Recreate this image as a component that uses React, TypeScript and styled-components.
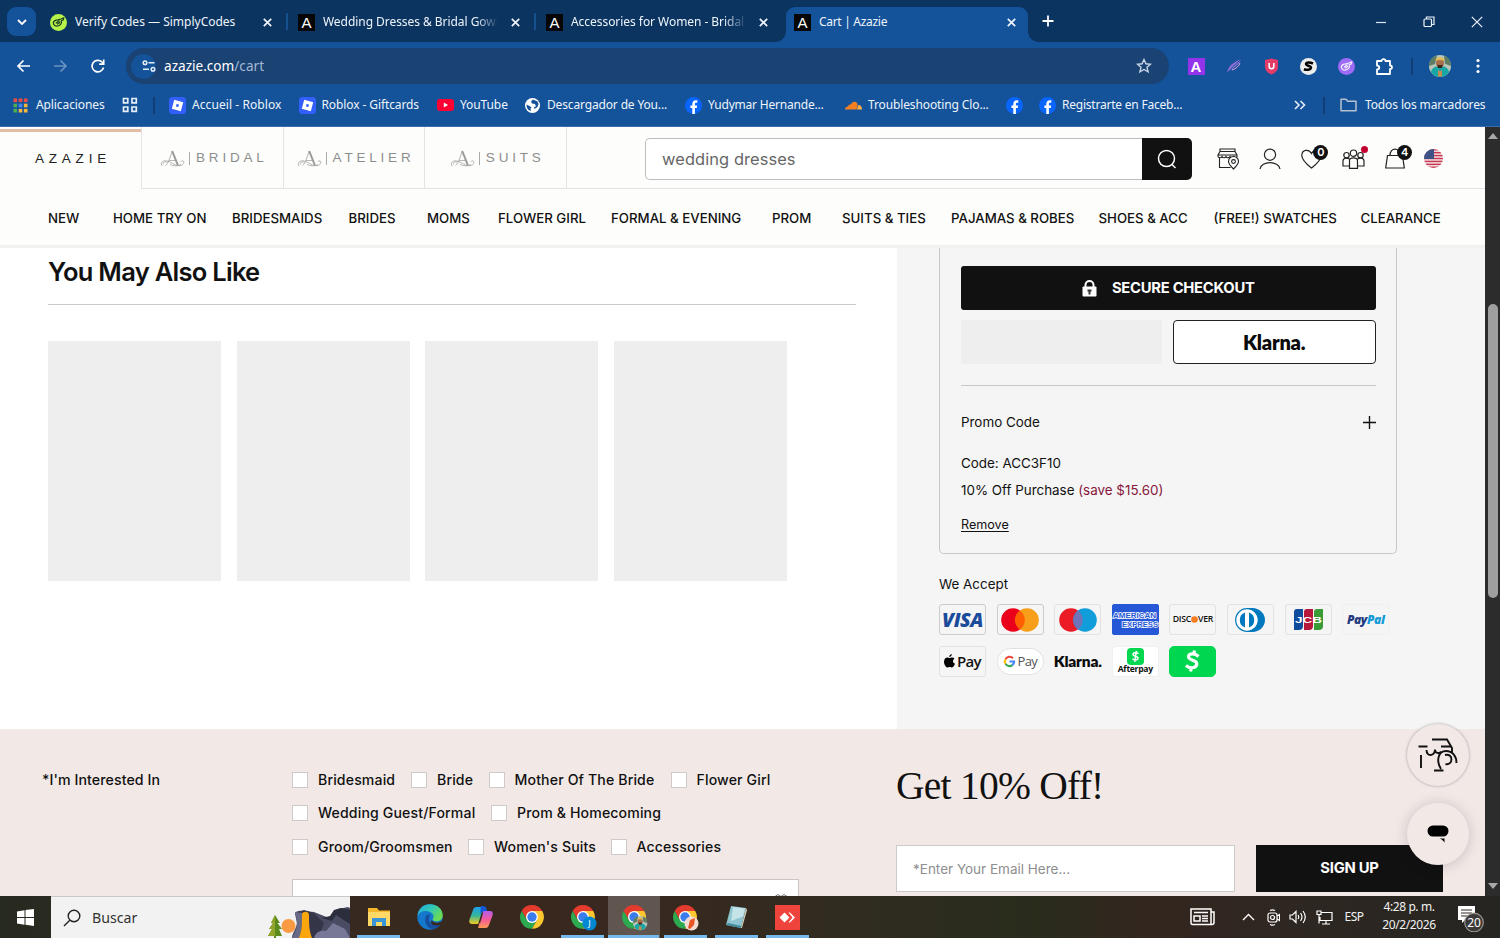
import React from "react";
import styled, { createGlobalStyle } from "styled-components";

const UI = `"Noto Sans", "Open Sans", sans-serif`;
const BODY = `Inter, "Liberation Sans", sans-serif`;

const Global = createGlobalStyle`
  *, *::before, *::after { box-sizing: border-box; }
  html, body { margin: 0; padding: 0; }
  body { width: 1500px; height: 938px; overflow: hidden; font-family: ${BODY}; color: #111; }
  svg { display: block; flex: none; }
`;

const Screen = styled.div`
  width: 1500px;
  height: 938px;
  display: flex;
  flex-direction: column;
  background: #14529a;
`;

/* ---------- browser chrome ---------- */

const TabStrip = styled.div`
  height: 42px;
  display: flex;
  align-items: flex-end;
  background: #0c3460;
`;

const TabSearch = styled.div`
  width: 29px;
  height: 29px;
  margin: 0 6px 6px 7px;
  border-radius: 9px;
  background: #14529a;
  display: grid;
  place-items: center;
`;

const TabBox = styled.div<{ $active?: boolean }>`
  position: relative;
  width: ${(p) => (p.$active ? 242 : 248)}px;
  height: 35px;
  padding: 0 12px 5px 8px;
  padding-right: ${(p) => (p.$active ? 12 : 18)}px;
  display: flex;
  align-items: center;
  gap: 8px;
  color: #eef4fb;
  border-radius: 9px 9px 0 0;
  background: ${(p) => (p.$active ? "#14529a" : "transparent")};
  &::before, &::after {
    content: "";
    display: ${(p) => (p.$active ? "block" : "none")};
    position: absolute;
    bottom: 0;
    width: 10px;
    height: 10px;
  }
  &::before { left: -10px; background: radial-gradient(circle at 0 0, transparent 9.5px, #14529a 10px); }
  &::after { right: -10px; background: radial-gradient(circle at 100% 0, transparent 9.5px, #14529a 10px); }
`;

const TabSep = styled.i`
  position: absolute;
  right: 2px;
  top: 6px;
  width: 2px;
  height: 17px;
  background: #17508f;
`;

const TabTitle = styled.span<{ $fade?: boolean; $ls?: number }>`
  flex: 1;
  min-width: 0;
  font: 400 12px/18px ${UI};
  letter-spacing: ${(p) => p.$ls ?? 0}px;
  white-space: nowrap;
  overflow: hidden;
  margin-right: 6px;
  ${(p) => p.$fade && "mask-image: linear-gradient(90deg, #000 88%, transparent 101%);"}
`;

const ABadge = styled.span<{ $c?: string }>`
  width: 17px;
  height: 17px;
  flex: none;
  background: ${(p) => p.$c ?? "#060606"};
  color: #fff;
  font: 400 15px/17px "Liberation Sans", sans-serif;
  font-weight: ${(p) => (p.$c ? 700 : 400)};
  text-align: center;
`;

const NewTab = styled.div`
  width: 40px;
  height: 42px;
  display: grid;
  place-items: center;
`;

const WindowButtons = styled.div`
  margin-left: auto;
  height: 42px;
  padding: 1px 1px 0 0;
  display: flex;
  align-items: center;
  gap: 36px;
  padding-right: 17px;
`;

const Toolbar = styled.div`
  height: 42px;
  padding-top: 6px;
  display: flex;
  background: #14529a;
`;

const NavButtons = styled.div`
  width: 126px;
  height: 36px;
  padding-left: 15px;
  display: flex;
  align-items: center;
  gap: 20px;
`;

const UrlBar = styled.div`
  width: 1043px;
  height: 36px;
  border-radius: 18px;
  background: #1a4272;
  display: flex;
  align-items: center;
  padding: 0 17px 0 5px;
  font: 400 13.6px/36px ${UI};
  color: #fff;
  span { color: #a3b8d2; }
  svg:last-child { margin-left: auto; }
`;

const SiteInfo = styled.div`
  width: 25px;
  height: 25px;
  border-radius: 50%;
  background: #14529a;
  display: grid;
  place-items: center;
  margin-right: 8px;
`;

const Extensions = styled.div`
  flex: 1;
  height: 36px;
  display: flex;
  padding-left: 8px;
`;

const Slot = styled.div<{ $w: number; $start?: boolean }>`
  width: ${(p) => p.$w}px;
  display: flex;
  justify-content: ${(p) => (p.$start ? "flex-start" : "center")};
  padding-left: ${(p) => (p.$start ? 10 : 0)}px;
  align-items: center;
`;

const Divider = styled.i`
  width: 2px;
  height: 17px;
  background: #103f78;
`;

const Bookmarks = styled.div`
  height: 42px;
  padding-left: 13px;
  display: flex;
  align-items: center;
  background: #14529a;
  color: #eef4fb;
`;

const Bookmark = styled.div<{ $w: number; $gap?: number; $ls?: number }>`
  width: ${(p) => p.$w}px;
  flex: none;
  display: flex;
  align-items: center;
  gap: ${(p) => p.$gap ?? 6}px;
  font: 400 12px/18px ${UI};
  letter-spacing: ${(p) => p.$ls ?? -0.1}px;
  white-space: nowrap;
`;

/* ---------- page ---------- */

const Viewport = styled.div`
  height: 770px;
  display: flex;
  overflow: hidden;
  border-top: 1px solid #3b6dab;
`;

const Page = styled.div`
  position: relative;
  width: 1485px;
  display: flex;
  flex-direction: column;
  background: #fff;
`;

const ScrollTrack = styled.div`
  width: 15px;
  display: flex;
  flex-direction: column;
  align-items: center;
  background: #2c2c2c;
  padding: 6px 0 7px;
`;

const ScrollThumb = styled.div`
  width: 10px;
  height: 294px;
  margin: 165px 0 auto;
  border-radius: 5px;
  background: #9f9f9f;
`;

const Arrow = styled.i<{ $down?: boolean }>`
  border: 5px solid transparent;
  border-top-width: ${(p) => (p.$down ? 6 : 0)}px;
  border-bottom-width: ${(p) => (p.$down ? 0 : 6)}px;
  border-top-color: ${(p) => (p.$down ? "#a8a8a8" : "transparent")};
  border-bottom-color: ${(p) => (p.$down ? "transparent" : "#a8a8a8")};
`;

const SiteHeader = styled.header`
  height: 121px;
  background: #fdfdfb;
  border-bottom: 3px solid #f1f1ef;
`;

const BrandRow = styled.div`
  height: 62px;
  display: flex;
`;

const BrandTab = styled.div<{ $active?: boolean; $ls: number }>`
  width: ${(p) => (p.$active ? 141 : 141.7)}px;
  height: ${(p) => (p.$active ? 60 : 62)}px;
  display: flex;
  align-items: center;
  justify-content: center;
  padding: ${(p) => (p.$active ? "0 0 3px 5px" : "1px 0 0 3px")};
  border-top: ${(p) => (p.$active ? "3px solid #e4bba5" : "0")};
  margin-top: ${(p) => (p.$active ? 2 : 0)}px;
  border-left: ${(p) => (p.$active ? "0" : "1px solid #e4e4e4")};
  border-bottom: ${(p) => (p.$active ? "0" : "1px solid #e4e4e4")};
  font: 400 13.5px/18px "Liberation Sans", sans-serif;
  letter-spacing: ${(p) => p.$ls}px;
  color: ${(p) => (p.$active ? "#222" : "#8d8d8d")};
`;

const BrandBar = styled.i`
  width: 1px;
  height: 13px;
  margin: 0 6px 0 4px;
  background: #aaa;
`;

const BrandRest = styled.div`
  flex: 1;
  display: flex;
  border-left: 1px solid #e4e4e4;
  border-bottom: 1px solid #e4e4e4;
  padding: 11px 0 0 78px;
`;

const SearchField = styled.div`
  width: 497px;
  height: 42px;
  border: 1px solid #bdbdbd;
  border-right: 0;
  border-radius: 5px 0 0 5px;
  background: #fff;
  padding-left: 16px;
  font: 400 16.4px/40px ${BODY};
  letter-spacing: 0.1px;
  color: #666;
`;

const SearchButton = styled.div`
  width: 50px;
  height: 42px;
  background: #111;
  border-radius: 0 5px 5px 0;
  display: grid;
  place-items: center;
  margin-right: 15px;
`;

const HeaderIcon = styled.div<{ $w?: number }>`
  position: relative;
  width: ${(p) => p.$w ?? 41.8}px;
  height: 41px;
  display: grid;
  place-items: center;
`;

const Count = styled.b`
  position: absolute;
  right: 4px;
  top: 7px;
  width: 15px;
  height: 15px;
  border-radius: 50%;
  background: #111;
  color: #fff;
  font: 600 11px/15px ${BODY};
  text-align: center;
`;

const RedDot = styled.i`
  position: absolute;
  right: 6px;
  top: 8px;
  width: 7px;
  height: 7px;
  border-radius: 50%;
  background: #c4002f;
`;

const MenuRow = styled.nav`
  height: 57px;
  padding-left: 48px;
  display: flex;
  align-items: center;
`;

const MenuItem = styled.span<{ $w: number }>`
  width: ${(p) => p.$w}px;
  flex: none;
  font: 500 13.25px/18px ${BODY};
  white-space: nowrap;
`;

const Content = styled.main`
  height: 481px;
  display: flex;
`;

const Suggestions = styled.section`
  width: 897px;
  padding: 6px 41px 0 48px;
`;

const Heading = styled.h2`
  margin: 0;
  padding-bottom: 14px;
  border-bottom: 1px solid #c9c9c9;
  font: 600 25.5px/36px ${BODY};
  letter-spacing: -0.72px;
  height: 51px;
`;

const Placeholders = styled.div`
  display: flex;
  gap: 15.5px;
  margin-top: 36px;
`;

const Placeholder = styled.div`
  width: 173px;
  height: 240px;
  background: #eee;
`;

const Summary = styled.aside`
  flex: 1;
  background: #f5f5f5;
  padding-left: 42px;
`;

const SummaryCard = styled.div`
  width: 458px;
  height: 306px;
  padding: 18px 20.5px 0 21px;
  border: 1px solid #c8c8c8;
  border-top: 0;
  border-radius: 0 0 5px 5px;
  font: 400 13.4px/18px ${BODY};
`;

const Checkout = styled.div`
  height: 44px;
  border-radius: 3px;
  background: #111;
  color: #fff;
  display: flex;
  align-items: center;
  justify-content: center;
  gap: 15px;
  font-weight: 700;
  font-size: 14.8px;
  letter-spacing: -0.27px;
`;

const PayRow = styled.div`
  display: flex;
  gap: 11px;
  margin-top: 10px;
  padding-bottom: 21px;
  border-bottom: 1px solid #c8c8c8;
`;

const PayBox = styled.div<{ $klarna?: boolean }>`
  flex: 1;
  height: 44px;
  border-radius: ${(p) => (p.$klarna ? 4 : 2)}px;
  border: ${(p) => (p.$klarna ? "1px solid #222" : "0")};
  background: ${(p) => (p.$klarna ? "#fff" : "#eee")};
  text-align: center;
`;

const Klarna = styled.span<{ $size: number; $lh: number }>`
  font: 800 ${(p) => p.$size}px/${(p) => p.$lh}px Lato, ${BODY};
  letter-spacing: -0.2px;
  color: #0b0b0b;
`;

const PromoHead = styled.div`
  display: flex;
  justify-content: space-between;
  align-items: center;
  margin-top: 27px;
`;

const PromoLine = styled.div<{ $mt: number }>`
  margin-top: ${(p) => p.$mt}px;
  em { font-style: normal; color: #86163b; }
  u { font-size: 12.6px; text-underline-offset: 1.5px; }
`;

const AcceptTitle = styled.div`
  margin-top: 21px;
  font: 400 13.4px/18px ${BODY};
`;

const Cards = styled.div`
  display: grid;
  grid-template-columns: repeat(8, 47px);
  grid-auto-rows: 31px;
  gap: 10.5px 10.6px;
  margin-top: 11px;
`;

const Card = styled.div<{ $bg?: string; $bd?: string; $pill?: boolean; $r?: number }>`
  border: 1px solid ${(p) => p.$bd ?? "#e2e2e2"};
  border-radius: ${(p) => (p.$pill ? 15 : p.$r ?? 3)}px;
  margin: ${(p) => (p.$pill ? "2px 0" : "0")};
  background: ${(p) => p.$bg ?? "transparent"};
  display: flex;
  align-items: center;
  justify-content: center;
  white-space: nowrap;
`;

const Logo = styled.span<{ $s: number; $c?: string; $i?: boolean; $wt?: number; $ls?: number }>`
  font: ${(p) => (p.$i ? "italic" : "normal")} ${(p) => p.$wt ?? 700} ${(p) => p.$s}px/1.1 "Open Sans", sans-serif;
  letter-spacing: ${(p) => p.$ls ?? 0}px;
  color: ${(p) => p.$c ?? "#111"};
`;

const Stack = styled.div`
  display: flex;
  flex-direction: column;
  align-items: center;
`;

const Signup = styled.footer`
  flex: 1;
  display: flex;
  background: #f2e9e7;
  overflow: hidden;
`;

const InterestTitle = styled.div`
  width: 292px;
  padding: 42px 0 0 42px;
  font: 500 14.2px/18px ${BODY};
  letter-spacing: 0.08px;
`;

const Interests = styled.div`
  width: 604px;
  padding-top: 42px;
`;

const CheckRow = styled.div`
  height: 18px;
  display: flex;
  margin-bottom: 15.3px;
`;

const Check = styled.label<{ $w: number }>`
  width: ${(p) => p.$w}px;
  display: flex;
  align-items: center;
  gap: 10px;
  font: 500 14.1px/18px ${BODY};
  letter-spacing: 0.14px;
  white-space: nowrap;
  &::before {
    content: "";
    width: 16px;
    height: 16px;
    flex: none;
    background: #fff;
    border: 1px solid #cfcaca;
  }
`;

const SelectBox = styled.div`
  width: 507px;
  height: 46px;
  margin-top: 23px;
  background: #fff;
  border: 1px solid #c9c5c5;
  display: flex;
  justify-content: flex-end;
  padding: 14px 10px 0 0;
`;

const Offer = styled.div`
  padding-top: 33px;
`;

const OfferTitle = styled.h3`
  margin: 0 0 35px;
  font: 400 39.5px/48px "Liberation Serif", serif;
  letter-spacing: -0.75px;
  white-space: nowrap;
`;

const OfferRow = styled.div`
  display: flex;
  gap: 21px;
`;

const Email = styled.div`
  width: 339px;
  height: 47px;
  border: 1px solid #cfcaca;
  background: #fff;
  padding-left: 16px;
  font: 400 13.5px/46px ${BODY};
  color: #8e8e8e;
`;

const SignButton = styled.div`
  width: 187px;
  height: 47px;
  background: #111;
  color: #fff;
  text-align: center;
  font: 700 14.8px/47px ${BODY};
  letter-spacing: -0.25px;
`;

const Float = styled.div<{ $top: number; $big?: boolean }>`
  position: absolute;
  left: 1407px;
  top: ${(p) => p.$top}px;
  width: 62px;
  height: 62px;
  border-radius: 50%;
  background: #f2e9e7;
  box-shadow: ${(p) => (p.$big ? "0 1px 14px rgba(0,0,0,.18)" : "0 0 3px rgba(0,0,0,.35)")};
  display: grid;
  place-items: center;
`;

/* ---------- taskbar ---------- */

const Taskbar = styled.div`
  height: 42px;
  display: flex;
  background: linear-gradient(90deg, #272a20 0, #38291f 380px, #38281f 640px, #302c20 860px, #292c1c 1030px, #33261f 1150px, #2e2721 1300px, #262522 1500px);
  color: #f2f2f2;
`;

const Start = styled.div`
  width: 51px;
  display: grid;
  place-items: center;
`;

const SearchBox = styled.div`
  width: 299px;
  display: flex;
  align-items: center;
  padding-left: 12px;
  background: #f2f2f2;
  color: #333;
  border-top: 1px solid #c9c9c9;
  font: 400 14.2px/38px ${UI};
  svg:first-child { margin-right: 11px; }
  svg:last-child { margin-left: auto; align-self: flex-end; }
`;

const TaskApps = styled.div`
  display: flex;
  padding-left: 3px;
`;

const TaskApp = styled.div<{ $run?: boolean; $on?: boolean }>`
  width: 51.1px;
  display: grid;
  place-items: center;
  background: ${(p) =>
    p.$on
      ? "linear-gradient(#76b9ed,#76b9ed) 0 100%/51px 3px no-repeat, #61564f"
      : p.$run
      ? "linear-gradient(#76b9ed,#76b9ed) 50% 100%/43px 3px no-repeat"
      : "none"};
`;

const Tray = styled.div`
  margin-left: auto;
  display: flex;
`;

const Clock = styled.div`
  font: 400 12px/18px ${UI};
  letter-spacing: -0.4px;
  text-align: center;
  padding-bottom: 2px;
  white-space: nowrap;
  width: 100%;
`;

const Lang = styled.span`
  font: 400 12px/18px ${UI};
  letter-spacing: -0.5px;
`;

/* ---------- drawings ---------- */

const CloseX = () => (
  <svg width="9" height="9" viewBox="0 0 9 9" stroke="#eef4fb" strokeWidth="1.7"><path d="M.8.8l7.4 7.4M8.2.8L.8 8.2" /></svg>
);
const Simply = ({ bg, fg }: { bg: string; fg: string }) => (
  <svg width="17" height="17" viewBox="0 0 17 17" fill="none" stroke={fg} strokeWidth="1.2" strokeLinejoin="round">
    <circle cx="8.5" cy="8.5" r="8.5" fill={bg} stroke="none" />
    <path d="M3.300 8.500C3.800 6.600 6 6 8 5.800L11 5l2.800-1.200-.6 2.200-2 .8c.8 2.300-.5 4-2.700 4.900C6 12.700 3.600 12 3.300 8.500zM5.800 9.200L9.500 6.800M7.200 10.300l2.800-2" />
  </svg>
);
const Roblox = () => (
  <svg width="17" height="17" viewBox="0 0 17 17"><rect width="17" height="17" rx="3.500" fill="#335fff" /><path fillRule="evenodd" fill="#fff" d="M5.200 2.800l9 2.400-2.400 9-9-2.400zM7.500 6.900l-.6 2.500 2.500.6.600-2.500z" /></svg>
);
const YouTube = () => (
  <svg width="17" height="12" viewBox="0 0 17 12"><rect width="17" height="12" rx="3" fill="#f03" /><path d="M6.800 3.500v5L11 6z" fill="#fff" /></svg>
);
const Globe = () => (
  <svg width="15" height="15" viewBox="0 0 15 15"><circle cx="7.500" cy="7.500" r="7.500" fill="#fff" /><path d="M8 1.500l-2 2 1 2 3 .5 1 2.500-2 .5 .5 2 3-2 1-3-1-2.500zM1.500 6.500l3 1.500 2 1.500-1 1 .5 2.500C3 12.500 1.500 10 1.500 6.500z" fill="#14529a" /></svg>
);
const Facebook = () => (
  <svg width="17" height="17" viewBox="0 0 17 17"><circle cx="8.500" cy="8.500" r="8.500" fill="#0866ff" /><path d="M7.300 17v-6H5.400V8.400h1.900V7.200c0-2.700 1.200-3.900 3.800-3.900.4 0 .9 0 1.200.1v2.400h-.9c-1.100 0-1.500.4-1.500 1.500v1.100h2.300l-.4 2.600H9.900v6z" fill="#fff" /></svg>
);
const Cloud = () => (
  <svg width="17" height="9" viewBox="0 0 17 9"><path d="M0 8.500C0 6.500 1.300 5.500 3 5.500 3.300 3.700 5 3.300 5.800 3.600 6.600 1.500 8.200.4 10 .8c1.800.4 2.700 2 2.600 3.600l-1 4.100z" fill="#f38020" /><path d="M12 8.500l1.300-4.600c2.300-.2 3.700 1.800 3.700 4.600z" fill="#faae40" /></svg>
);
const Monogram = () => (
  <svg width="25" height="17" viewBox="0 0 25 17" fill="none" stroke="#999" strokeWidth=".8">
    <path d="M5.500 15.500C8.500 13.500 10 7 12.300 1.200" /><path d="M12.200 1l5.600 14" strokeWidth="2" />
    <path d="M2 16C0 13 2.500 10.500 6 10.800c4.500.4 8 4.700 13 4.900 3.500 0 5.500-2.200 4.700-4.200-.7-1.200-2.500-.8-2.700.4M3.500 14.500C2.500 12.500 5 11.300 7 12M9 10.500h7M10 14.500c3.500 1.800 8 1.800 11 0" strokeWidth=".7" />
  </svg>
);
const Chrome = ({ children }: { children?: React.ReactNode }) => (
  <svg width="28" height="28" viewBox="-1 -1 28 28">
    <path d="M2.470 6.500A11 11 0 0 1 21.530 6.500H12L7.240 14.750z" fill="#e33b2e" transform="scale(1.080)" />
    <path d="M2.470 6.500A11 11 0 0 0 12 23L16.760 14.750 12 12 7.240 14.750z" fill="#2da94f" transform="scale(1.080)" />
    <path d="M12 23A11 11 0 0 0 21.530 6.500H12V12l4.760 2.750z" fill="#fdc82f" transform="scale(1.080)" />
    <circle cx="13" cy="13" r="6" fill="#fff" /><circle cx="13" cy="13" r="4.700" fill="#3b7ded" />
    {children}
  </svg>
);
const Person = () => (
  <>
    <circle cx="11" cy="11" r="11" fill="#b9c4ba" />
    <path d="M0 11C0 5 4 1 8 .400L6 9zM22 11C22 5 18 1 15 .800l1 8z" fill="#5d7d64" />
    <path d="M2 17c1-4 4-6 9-6s8 2 9 6c-2 3-5 5-9 5s-7-2-9-5z" fill="#18a7a6" />
    <ellipse cx="11" cy="8" rx="4" ry="5" fill="#a96f4b" /><path d="M6.500 6c0-5 9-5 9 0-3-1.200-6-1.200-9 0z" fill="#e1bc54" />
    <path d="M8.500 9.500c1.500 1 3.500 1 5 0L13 13H9z" fill="#3a261d" /><path d="M9 15l2 1.500 2-1.500v6.500H9z" fill="#c58d4e" />
  </>
);

const tabs = ["Wedding Dresses & Bridal Gowns", "Accessories for Women - Bridal |"];

const menu: [string, number][] = [
  ["NEW", 65], ["HOME TRY ON", 119], ["BRIDESMAIDS", 116.500], ["BRIDES", 78.500], ["MOMS", 71],
  ["FLOWER GIRL", 113], ["FORMAL & EVENING", 161], ["PROM", 70], ["SUITS & TIES", 109],
  ["PAJAMAS & ROBES", 147.500], ["SHOES & ACC", 115], ["(FREE!) SWATCHES", 147], ["CLEARANCE", 90],
];

const interests: [string, number][][] = [
  [["Bridesmaid", 119], ["Bride", 77.500], ["Mother Of The Bride", 182], ["Flower Girl", 120]],
  [["Wedding Guest/Formal", 199], ["Prom & Homecoming", 180]],
  [["Groom/Groomsmen", 176], ["Women's Suits", 142.500], ["Accessories", 120]],
];

export default function App() {
  return (
    <Screen>
      <Global />
      <TabStrip>
        <TabSearch><svg width="10" height="6" viewBox="0 0 10 6" fill="none" stroke="#fff" strokeWidth="1.800"><path d="M1 1l4 4 4-4" /></svg></TabSearch>
        <TabBox>
          <Simply bg="#b5f34b" fg="#17351d" />
          <TabTitle>Verify Codes — SimplyCodes</TabTitle><CloseX /><TabSep />
        </TabBox>
        {tabs.map((t, i) => (
          <TabBox key={t}><ABadge>A</ABadge><TabTitle $fade $ls={-0.05}>{t}</TabTitle><CloseX />{i === 0 && <TabSep />}</TabBox>
        ))}
        <TabBox $active><ABadge>A</ABadge><TabTitle $ls={-0.3}>Cart | Azazie</TabTitle><CloseX /></TabBox>
        <NewTab><svg width="12" height="12" viewBox="0 0 12 12" stroke="#fff" strokeWidth="1.800"><path d="M6 .5v11M.5 6h11" /></svg></NewTab>
        <WindowButtons>
          <svg width="12" height="12" viewBox="0 0 12 12" stroke="#dce7f3" strokeWidth="1.200"><path d="M1 6.500h10" /></svg>
          <svg width="12" height="12" viewBox="0 0 12 12" fill="none" stroke="#eef4fb" strokeWidth="1.200"><rect x="1" y="3" width="7.500" height="7.500" rx="1" /><path d="M3.500 3V1H11v7.500H8.500" /></svg>
          <svg width="12" height="12" viewBox="0 0 12 12" stroke="#eef4fb" strokeWidth="1.200"><path d="M.8.800l10.400 10.400M11.200.800L.800 11.200" /></svg>
        </WindowButtons>
      </TabStrip>

      <Toolbar>
        <NavButtons>
          <svg width="17" height="16" viewBox="0 0 17 16" fill="none" stroke="#fff" strokeWidth="1.700"><path d="M15 8H3M8.500 2.500L3 8l5.500 5.500" /></svg>
          <svg width="17" height="16" viewBox="0 0 17 16" fill="none" stroke="#6d93c2" strokeWidth="1.600"><path d="M2 8h12M8.500 2.500L14 8l-5.500 5.500" /></svg>
          <svg width="17" height="16" viewBox="0 0 17 16" fill="none" stroke="#fff" strokeWidth="1.700"><path d="M14.500 9.500A5.800 5.800 0 1 1 13 4l1.500 1.500" /><path d="M14.700 1.500v4.600h-4.500" /></svg>
        </NavButtons>
        <UrlBar>
          <SiteInfo><svg width="14" height="12" viewBox="0 0 14 12" fill="none" stroke="#e6eef8" strokeWidth="1.500"><circle cx="3" cy="2.700" r="1.800" /><path d="M6.500 2.700h6M1 9.300h6" /><circle cx="11" cy="9.300" r="1.800" /></svg></SiteInfo>
          azazie.com<span>/cart</span>
          <svg width="16" height="16" viewBox="0 0 16 16" fill="none" stroke="#c8d6e6" strokeWidth="1.400"><path d="M8 1.500l1.900 4.300 4.600.4-3.500 3.100 1.100 4.600L8 11.500l-4.100 2.400L5 9.300 1.500 6.200l4.600-.4z" /></svg>
        </UrlBar>
        <Extensions>
          <Slot $w={38}><ABadge $c="#9333ea">A</ABadge></Slot>
          <Slot $w={37.500}><svg width="16" height="16" viewBox="0 0 16 16"><path d="M1 15C2 8 8 4 15 1c-1 3-3 5-5 7-3 3-5 3-9 7z" fill="#9673d8" /><path d="M1 15C5 10 9 7 15 1" stroke="#14529a" strokeWidth="1" fill="none" /><path d="M6 12c4-1 7-4 8-7" stroke="#e0a6e5" strokeWidth="1" fill="none" /></svg></Slot>
          <Slot $w={37.500}><svg width="15" height="17" viewBox="0 0 15 17"><path d="M7.500.500L14 2v7c0 3.500-3 6-6.500 7.500C4 15 1 12.500 1 9V2z" fill="#e33c68" /><path d="M5.200 5v3.500c0 3 4.600 3 4.600 0V5" fill="none" stroke="#fff" strokeWidth="1.600" /></svg></Slot>
          <Slot $w={37.500}><svg width="17" height="17" viewBox="0 0 17 17"><circle cx="8.500" cy="8.500" r="8.500" fill="#ededed" /><path d="M13 5.500C10 4 6.300 4 6.100 6s5.200 1.500 4.800 4c-.4 2-4 2.200-7 1.200" fill="none" stroke="#000" strokeWidth="2.600" /></svg></Slot>
          <Slot $w={37.500}><Simply bg="#9d6bf6" fg="#f5efff" /></Slot>
          <Slot $w={39}><svg width="19" height="19" viewBox="0 0 19 19" fill="none" stroke="#fff" strokeWidth="1.800" strokeLinejoin="round"><path d="M2 4h4.500C6.500 1.500 10.500 1.500 10.500 4H15v4.500c2.600 0 2.600 3.500 0 3.500v5H2v-4.500c3 0 3-4 0-4z" /></svg></Slot>
          <Slot $w={16}><Divider /></Slot>
          <Slot $w={40}><svg width="22" height="22" viewBox="0 0 22 22"><Person /></svg></Slot>
          <Slot $w={35}><svg width="4" height="16" viewBox="0 0 4 16" fill="#fff"><circle cx="2" cy="2.500" r="1.600" /><circle cx="2" cy="8" r="1.600" /><circle cx="2" cy="13.500" r="1.600" /></svg></Slot>
        </Extensions>
      </Toolbar>

      <Bookmarks>
        <Bookmark $w={109} $gap={8}>
          <svg width="15" height="15" viewBox="0 0 15 15">
            {["#ea4c42", "#ea4c42", "#ea4c42", "#4caf50", "#4287f5", "#f6b73c", "#4caf50", "#f6b73c", "#f6b73c"].map((c, i) => (
              <rect key={i} x={.5 + (i % 3) * 5.200} y={.5 + Math.floor(i / 3) * 5.200} width="3.600" height="3.600" fill={c} />
            ))}
          </svg>
          Aplicaciones
        </Bookmark>
        <Bookmark $w={31}><svg width="16" height="16" viewBox="0 0 16 16" fill="none" stroke="#e6eef8" strokeWidth="1.700"><path d="M1.500 1.500h4.300v4.300H1.500zM10 1.500h4.300v4.300H10zM1.500 10h4.300v4.300H1.500zM10 10h4.300v4.300H10z" /></svg></Bookmark>
        <Bookmark $w={16}><Divider /></Bookmark>
        <Bookmark $w={129.500} $ls={0.08}><Roblox />Accueil - Roblox</Bookmark>
        <Bookmark $w={138.500}><Roblox />Roblox - Giftcards</Bookmark>
        <Bookmark $w={88}><YouTube />YouTube</Bookmark>
        <Bookmark $w={160} $gap={7} $ls={-0.15}><Globe />Descargador de You...</Bookmark>
        <Bookmark $w={160} $ls={-0.2}><Facebook />Yudymar Hernande...</Bookmark>
        <Bookmark $w={161} $ls={-0.12}><Cloud />Troubleshooting Clo...</Bookmark>
        <Bookmark $w={33}><Facebook /></Bookmark>
        <Bookmark $w={255} $ls={-0.22}><Facebook />Registrarte en Faceb...</Bookmark>
        <Bookmark $w={29}><svg width="12" height="10" viewBox="0 0 12 10" fill="none" stroke="#e6eef8" strokeWidth="1.600"><path d="M1 1l4 4-4 4M6.500 1l4 4-4 4" /></svg></Bookmark>
        <Bookmark $w={17}><Divider /></Bookmark>
        <Bookmark $w={150} $gap={8} $ls={-0.12}><svg width="17" height="14" viewBox="0 0 17 14" fill="none" stroke="#b7c2d0" strokeWidth="1.500" strokeLinejoin="round"><path d="M1 12.700V1.200h5l1.700 2H16v9.500z" /></svg>Todos los marcadores</Bookmark>
      </Bookmarks>

      <Viewport>
        <Page>
          <SiteHeader>
            <BrandRow>
              <BrandTab $active $ls={4.800}>AZAZIE</BrandTab>
              <BrandTab $ls={3.800}><Monogram /><BrandBar />BRIDAL</BrandTab>
              <BrandTab $ls={3.800}><Monogram /><BrandBar />ATELIER</BrandTab>
              <BrandTab $ls={3.800}><Monogram /><BrandBar />SUITS</BrandTab>
              <BrandRest>
                <SearchField>wedding dresses</SearchField>
                <SearchButton><svg width="20" height="20" viewBox="0 0 20 20" fill="none" stroke="#fff" strokeWidth="1.500"><circle cx="9.500" cy="9.500" r="8" /><path d="M14.500 15l4 4" /></svg></SearchButton>
                <HeaderIcon>
                  <svg width="22" height="22" viewBox="0 0 22 22" fill="none" stroke="#222" strokeWidth="1.100"><path d="M3 1h15v2.500H3zM3 3.500L1 7v1.500c1 1.700 3 1.700 4 0 1 1.700 3 1.700 4 0 1 1.700 3 1.700 4 0 1 1.700 3 1.700 4 0 1 1.500 2.500 1.500 3 0V7l-2-3.500M2.500 10v9.500h11M1.500 7H20" /><path d="M16.500 21c-3-3-5-5-5-7.500a5 5 0 0 1 10 0c0 2.500-2 4.500-5 7.500z" fill="#fff" /><circle cx="16.500" cy="13.500" r="1.900" /></svg>
                </HeaderIcon>
                <HeaderIcon><svg width="22" height="22" viewBox="0 0 22 22" fill="none" stroke="#222" strokeWidth="1.200"><circle cx="11" cy="6.700" r="5.600" /><path d="M1 21c1-8.500 19-8.500 20 0" /></svg></HeaderIcon>
                <HeaderIcon><svg width="21" height="20" viewBox="0 0 21 20" fill="none" stroke="#222" strokeWidth="1.200"><path d="M10.500 19C6 15.500.800 11.500.800 6.500.800.700 8-.500 10.500 4.500 13-.500 20.200.700 20.200 6.500c0 5-5.200 9-9.700 12.500z" /></svg><Count>0</Count></HeaderIcon>
                <HeaderIcon>
                  <svg width="23" height="20" viewBox="0 0 23 20" fill="none" stroke="#222" strokeWidth="1.200"><circle cx="11.500" cy="4.200" r="3.200" /><circle cx="4.500" cy="6.200" r="2.700" /><circle cx="18.500" cy="6.200" r="2.700" /><path d="M7.500 19.300v-7.500c0-4 8-4 8 0v7.500zM7.500 17H1v-5c0-3.500 4.500-3.500 6.500-2M15.500 17H22v-5c0-3.500-4.500-3.500-6.500-2" /></svg><RedDot />
                </HeaderIcon>
                <HeaderIcon><svg width="20" height="21" viewBox="0 0 20 21" fill="none" stroke="#222" strokeWidth="1.200"><path d="M2.500 7.500h15l1.800 12.500H.700zM5 7.500C5-1 15-1 15 7.500" /></svg><Count>4</Count></HeaderIcon>
                <HeaderIcon $w={35}>
                  <svg width="19" height="19" viewBox="0 0 19 19"><clipPath id="flag"><circle cx="9.500" cy="9.500" r="9.500" /></clipPath><g clipPath="url(#flag)"><rect width="19" height="19" fill="#f3e8ea" />{[0, 1, 2, 3, 4, 5, 6].map((i) => <rect key={i} y={i * 2.920} width="19" height="1.500" fill="#c9364f" />)}<rect width="10" height="10" fill="#3d5285" /></g></svg>
                </HeaderIcon>
              </BrandRest>
            </BrandRow>
            <MenuRow>{menu.map(([t, w]) => <MenuItem key={t} $w={w}>{t}</MenuItem>)}</MenuRow>
          </SiteHeader>

          <Content>
            <Suggestions>
              <Heading>You May Also Like</Heading>
              <Placeholders><Placeholder /><Placeholder /><Placeholder /><Placeholder /></Placeholders>
            </Suggestions>
            <Summary>
              <SummaryCard>
                <Checkout>
                  <svg width="15" height="17" viewBox="0 0 15 17"><path d="M3.500 8V5a4 4 0 0 1 8 0v3" fill="none" stroke="#fff" strokeWidth="2" /><rect x=".5" y="6.500" width="14" height="10" rx="1" fill="#fff" /><path d="M5.500 9.500h4v2h-1v3h-2v-3h-1z" fill="#333" /></svg>
                  SECURE CHECKOUT
                </Checkout>
                <PayRow><PayBox /><PayBox $klarna><Klarna $size={20} $lh={42}>Klarna.</Klarna></PayBox></PayRow>
                <PromoHead>Promo Code<svg width="13" height="13" viewBox="0 0 13 13" stroke="#111" strokeWidth="1.400"><path d="M6.500 0v13M0 6.500h13" /></svg></PromoHead>
                <PromoLine $mt={23}>Code: ACC3F10</PromoLine>
                <PromoLine $mt={9}>10% Off Purchase <em>(save $15.60)</em></PromoLine>
                <PromoLine $mt={16}><u>Remove</u></PromoLine>
              </SummaryCard>
              <AcceptTitle>We Accept</AcceptTitle>
              <Cards>
                <Card $bd="#ccc"><Logo $s={19.500} $c="#1b4b9b" $i $wt={800} $ls={-0.5}>VISA</Logo></Card>
                <Card $bd="#ccc"><svg width="38" height="24" viewBox="0 0 38 24"><circle cx="12" cy="12" r="11.800" fill="#eb001b" /><circle cx="26" cy="12" r="11.800" fill="#f79e1b" /><path d="M19 2.500a11.800 11.800 0 0 1 0 19 11.800 11.800 0 0 1 0-19z" fill="#ff5f00" /></svg></Card>
                <Card><svg width="38" height="24" viewBox="0 0 38 24"><circle cx="12" cy="12" r="11.800" fill="#eb1c26" /><circle cx="26" cy="12" r="11.800" fill="#119dda" /><path d="M19 2.500a11.800 11.800 0 0 1 0 19 11.800 11.800 0 0 1 0-19z" fill="#7073b8" /></svg></Card>
                <Card $bg="#2557d6" $bd="#2557d6" $r={2}>
                  <svg width="47" height="31" viewBox="0 0 47 31" fontFamily="Liberation Sans" fontWeight="700" fontSize="8" fill="#2557d6" stroke="#fff" strokeWidth="1.600" paintOrder="stroke"><text x="1" y="14" textLength="43" lengthAdjust="spacingAndGlyphs">AMERICAN</text><text x="10" y="23" textLength="36" lengthAdjust="spacingAndGlyphs">EXPRESS</text></svg>
                </Card>
                <Card><Logo $s={8.700} $wt={600} $ls={-0.25}>DISC</Logo><svg width="7" height="7" viewBox="0 0 7 7"><circle cx="3.500" cy="3.500" r="3.300" fill="#f47b20" /></svg><Logo $s={8.700} $wt={600} $ls={-0.25}>VER</Logo></Card>
                <Card><svg width="30" height="24" viewBox="0 0 30 24"><path d="M12 0h5.500C24 0 30 5 30 12s-6 12-12.500 12H12z" fill="#0079be" /><circle cx="12" cy="12" r="11.300" fill="#fff" stroke="#0079be" strokeWidth="1.200" /><path d="M10 4.500v15a8 8 0 0 1 0-15zM14 4.500v15a8 8 0 0 0 0-15z" fill="#0079be" /></svg></Card>
                <Card>
                  <svg width="29" height="21" viewBox="0 0 29 21"><path d="M3 0h6v17q0 4-4 4H0V3q0-3 3-3z" fill="#0f4c9b" /><path d="M13 0h6v17q0 4-4 4h-5V3q0-3 3-3z" fill="#b8173c" /><path d="M23 0h6v17q0 4-4 4h-5V3q0-3 3-3z" fill="#3a9b37" /><text x="1" y="14" fontFamily="Liberation Sans" fontWeight="700" fontSize="9.500" fill="#fff" textLength="27" lengthAdjust="spacingAndGlyphs">JCB</text></svg>
                </Card>
                <Card $bd="#f0f0f0"><Logo $s={12} $c="#243b80" $i $wt={800} $ls={-0.4}>Pay</Logo><Logo $s={12} $c="#139ad6" $i $wt={800} $ls={-0.4}>Pal</Logo></Card>
                <Card><svg width="11" height="14" viewBox="0 0 11 14"><path d="M7.800 0c0 1.600-1 2.900-2.500 3C5.200 1.500 6.300.300 7.800 0zM5.500 4c.8 0 1.500-.6 2.500-.6.900 0 1.900.500 2.500 1.400C8.300 6 8.600 9 11 9.800c-.6 1.700-1.800 3.700-3 3.700-.9 0-1.300-.5-2.300-.5s-1.500.5-2.300.5C1.800 13.500 0 10.500 0 7.800 0 5 1.700 3.500 3.300 3.500c.9 0 1.600.5 2.200.5z" fill="#000" /></svg><Logo $s={15} $wt={600} $ls={-0.7}>&thinsp;Pay</Logo></Card>
                <Card $bg="#fff" $pill>
                  <svg width="13" height="13" viewBox="0 0 12 12" fill="none" strokeWidth="1.900"><path d="M9.200 3A4.300 4.300 0 0 0 2.300 3.900" stroke="#ea4335" /><path d="M2.300 3.900a4.300 4.300 0 0 0 0 4.200" stroke="#fbbc04" /><path d="M2.300 8.100a4.300 4.300 0 0 0 6.400 1.200" stroke="#34a853" /><path d="M8.700 9.300A4.300 4.300 0 0 0 10.300 6H6" stroke="#4285f4" /></svg>
                  <Logo $s={13} $c="#555" $wt={400} $ls={-0.6}>&thinsp;Pay</Logo>
                </Card>
                <Card $bd="transparent"><Klarna $size={15.500} $lh={29}>Klarna.</Klarna></Card>
                <Card $bg="#fff" $bd="#f0f0f0">
                  <Stack><svg width="17" height="17" viewBox="0 0 17 17"><rect width="17" height="17" rx="4" fill="#00d64f" /><path d="M11.500 5.800C10 4.200 6 4.300 6 6.400s5.300 1.600 5 4c-.2 2-4 2-5.600.300M9.400 2.800l-1.700 11" fill="none" stroke="#fff" strokeWidth="1.500" /></svg><Logo $s={8.600} $wt={700} $ls={-0.3}>Afterpay</Logo></Stack>
                </Card>
                <Card $bg="#00d64f" $bd="#00d64f" $r={5}><svg width="17" height="24" viewBox="0 0 17 24" fill="none" stroke="#fff" strokeWidth="3.200"><path d="M14.500 7.500C11 4 5 4.200 4.500 7.500c-.4 4.500 8.800 3 8.300 7.500C12.400 19.500 6 20 2 16.500M10.500 1.500L9.900 5M7.200 19l-.6 3.500" /></svg></Card>
              </Cards>
            </Summary>
          </Content>

          <Signup>
            <InterestTitle>*I'm Interested In</InterestTitle>
            <Interests>
              {interests.map((row, i) => (
                <CheckRow key={i}>{row.map(([t, w]) => <Check key={t} $w={w}>{t}</Check>)}</CheckRow>
              ))}
              <SelectBox><svg width="13" height="6" viewBox="0 0 13 6" fill="none" stroke="#777"><path d="M0 2.500L3 .500l3 2 3-2 3 2" /></svg></SelectBox>
            </Interests>
            <Offer>
              <OfferTitle>Get 10% Off!</OfferTitle>
              <OfferRow><Email>*Enter Your Email Here...</Email><SignButton>SIGN UP</SignButton></OfferRow>
            </Offer>
          </Signup>

          <Float $top={597}>
            <svg width="42" height="36" viewBox="0 -1 40 36" fill="none" stroke="#111" strokeWidth="1.900"><path d="M14 1.500h15l5 8.500v4M.500 8.500h9M23 8.500h10M3 17v13M16 32.500h9.500M8.500 12c0 7 8 6.500 8.500-.5 0 4 4 4.500 6 2M23 31c-5-8-3-18 5-18 6.500 0 10.500 5 10.500 12M27 17c9-2 8 11 .5 9" /></svg>
          </Float>
          <Float $top={676} $big>
            <svg width="22" height="18" viewBox="0 0 22 18"><rect x=".5" y=".5" width="21" height="11" rx="5.500" fill="#000" /><path d="M12.500 13.500h5v4.500q-1-3-5-4.500z" fill="#000" /></svg>
          </Float>
        </Page>
        <ScrollTrack><Arrow /><ScrollThumb /><Arrow $down /></ScrollTrack>
      </Viewport>

      <Taskbar>
        <Start><svg width="17" height="17" viewBox="0 0 17 17" fill="#fff"><path d="M0 2.400L7.500 1.300V8H0zM8.500 1.100L17 0v8H8.500zM0 9h7.500v6.700L0 14.600zM8.500 9H17v8l-8.500-1.200z" /></svg></Start>
        <SearchBox>
          <svg width="18" height="18" viewBox="0 0 18 18" fill="none" stroke="#222" strokeWidth="1.400"><circle cx="11" cy="7" r="5.800" /><path d="M6.800 11.200L1 17" /></svg>
          Buscar
          <svg width="82" height="32" viewBox="0 0 82 32">
            <circle cx="20.500" cy="20" r="7" fill="#fa9a42" />
            <path d="M24 32c0-5 4-8 5-15l-2-9c0-3 5-4 9-3l10 1 10 4 8 3 6-10 10-2 2 1v30z" fill="#4a4c64" /><path d="M28 7l8-3 10 3 10 10-6 15H36V8z" fill="#343648" /><path d="M27 6l8 1-3 25h-8c4-7 7-12 3-26z" fill="#686b88" />
            <path d="M34 8c1-3 7-3 7 1 0 9 0 15 3 23H31c3-8 3-14 3-24z" fill="#fba60d" />
            <path d="M46 32c2-6 6-8 12-7l7-8 12 6 5 9z" fill="#777897" /><path d="M54 12l10 3 4-6 14 9V4l-9-2-7 2-4 6z" fill="#2c2e3e" />
            <path d="M7 9l5 8H9.500l4.500 6h-3l3 7H8v2H6v-2H0l4-7H1l4-6H3z" fill="#5d8a1d" /><path d="M7 9v21H0l4-7H1l4-6H3z" fill="#90a52a" />
          </svg>
        </SearchBox>
        <TaskApps>
          <TaskApp $run><svg width="24" height="20" viewBox="0 0 24 20"><path d="M1 1h9l2 2.500h11V19H1z" fill="#f4b62c" /><path d="M1 5h22v14H1z" fill="#ffd866" /><path d="M5 19v-8h14v8h-4v-4H9v4z" fill="#3a95d8" /></svg></TaskApp>
          <TaskApp>
            <svg width="26" height="26" viewBox="0 0 26 26"><defs><linearGradient id="e1" x1="0" x2="1" y1="0" y2=".6"><stop stopColor="#25a7de" /><stop offset=".5" stopColor="#2fc8b8" /><stop offset="1" stopColor="#6edb50" /></linearGradient></defs><circle cx="13" cy="13" r="12.700" fill="#1478cc" /><path d="M16 17.500c3 2 7 1.500 10-1.500v7l-4 .5c-4 0-9-3-8-7z" fill="#38291f" /><path d="M.5 12C1 5 6 .3 13 .3c8 0 12.700 5.500 12.700 11 0 4-3 6-6 6-4 0-4.500-2-3.500-3.300C18 11 14 7 9 7 5 7 1.500 9 .5 12z" fill="url(#e1)" /><path d="M9.500 11c-3.500 5 0 14 7 14.300 3-.7 5-2.300 7-4.800-6 2.500-12-.5-11.500-5.500 0-2 .5-3 1.500-4.500z" fill="#164f9f" /></svg>
          </TaskApp>
          <TaskApp>
            <svg width="24" height="24" viewBox="0 0 24 24"><defs><linearGradient id="c1" x1="0" x2="0" y1="0" y2="1"><stop stopColor="#1aa0f0" /><stop offset=".5" stopColor="#35b69a" /><stop offset="1" stopColor="#f5cb20" /></linearGradient><linearGradient id="c2" x1="0" x2="0" y1="0" y2="1"><stop stopColor="#b65cf0" /><stop offset=".5" stopColor="#f45b98" /><stop offset="1" stopColor="#fc9b53" /></linearGradient></defs><path d="M7.500 2H15l-4 14c-.7 2.500-2 3-4 3H3c-2.500 0-3.300-2-2.500-4.500L4 5c.6-2 1.600-3 3.500-3z" fill="url(#c1)" /><path d="M12 1h2.500c2 0 2.500 1 3 3l.8 3H14c-2 0-2.500 1-3 3z" fill="#1556d6" /><path d="M15.500 6H21c2.500 0 3.300 2 2.500 4.500L20 20c-.6 2-1.600 3-3.500 3H9l4-14c.6-2 1-3 2.500-3z" fill="url(#c2)" /><path d="M13.500 7.500L10.300 18" stroke="#38291f" strokeWidth="1.500" /></svg>
          </TaskApp>
          <TaskApp><Chrome /></TaskApp>
          <TaskApp $run><Chrome><circle cx="19.500" cy="19.500" r="7" fill="#0288d1" /><text x="19.500" y="23" textAnchor="middle" fontFamily="Noto Sans" fontSize="9" fill="#fff">J</text></Chrome></TaskApp>
          <TaskApp $run $on><Chrome><g transform="translate(12 12) scale(.65)"><Person /></g></Chrome></TaskApp>
          <TaskApp $run><Chrome><circle cx="19.500" cy="19.500" r="7" fill="#f3ddd3" /><path d="M16 24l2-8 5-2-1 7-4 4z" fill="#e85425" /></Chrome></TaskApp>
          <TaskApp $run><svg width="24" height="24" viewBox="0 0 24 24"><path d="M7 1l15 2-5 20-15-3z" fill="#8fc5d0" /><path d="M9 2l12 1.500-2 8L7 16z" fill="#c5e4e8" /><path d="M2 20l15 3 .5-2L4 18z" fill="#428ca3" /><path d="M22 3l1 2-5 18h-1z" fill="#d6d2b9" /></svg></TaskApp>
          <TaskApp $run><svg width="25" height="25" viewBox="0 0 25 25"><rect width="25" height="25" fill="#ef443b" /><path d="M9.500 7.500l5 5-5 5-5-5z" fill="#fff" /><path d="M13.500 7.500l1.500 0 5 5-5 5h-1.500l4-5z" fill="#fff" /></svg></TaskApp>
        </TaskApps>
        <Tray>
          <Slot $w={58}><svg width="25" height="18" viewBox="0 0 25 18" fill="none" stroke="#fff" strokeWidth="1.500"><path d="M1 1h20v15.500H2.500Q1 16.500 1 15zM21 4h3v10.500q0 2-2 2h-1.500M4 4.500h14M4 8h6v5H4zM12 8h6M12 10.500h6M12 13h6" /></svg></Slot>
          <Slot $w={34}><svg width="13" height="8" viewBox="0 0 13 8" fill="none" stroke="#fff" strokeWidth="1.300"><path d="M1 7l5.500-5.500L12 7" /></svg></Slot>
          <Slot $w={16}><svg width="13" height="17" viewBox="0 0 13 17" fill="none" stroke="#fff" strokeWidth="1.200"><rect x="1" y="4" width="9" height="9" rx="2" /><circle cx="5.500" cy="8.500" r="2" /><path d="M10 7l2.500-1.500v6L10 10M3 1.500Q5.500.3 8 1.500M3 15.500q2.500 1.200 5 0" /></svg></Slot>
          <Slot $w={32}><svg width="17" height="14" viewBox="0 0 17 14" fill="none" stroke="#fff" strokeWidth="1.200"><path d="M1 5h2.500L7 1.500v11L3.500 9H1zM9 5q1.500 2 0 4M11.500 3q3 4 0 8M14 1q4.500 6 0 12" /></svg></Slot>
          <Slot $w={22}><svg width="17" height="15" viewBox="0 0 17 15" fill="none" stroke="#fff" strokeWidth="1.200"><path d="M5 2.500h11v8H4V7M10 10.500v3M6 14h8M1 1h4v3.500H1zM3 4.500v9" /></svg></Slot>
          <Slot $w={38}><Lang>ESP</Lang></Slot>
          <Slot $w={72}><Clock>4:28 p. m.<br />20/2/2026</Clock></Slot>
          <Slot $w={55} $start>
            <svg width="30" height="30" viewBox="0 0 30 30"><path d="M3 4h17v14H10l-3 3v-3H3z" fill="#fff" /><path d="M6 8h11M6 11h11M6 14h8" stroke="#332a25" strokeWidth="1.200" /><circle cx="19" cy="20.500" r="9.300" fill="#3c3a38" stroke="#99948f" strokeWidth="1.200" /><text x="19" y="25" textAnchor="middle" fontFamily="Noto Sans" fontSize="12" fill="#fff">20</text></svg>
          </Slot>
        </Tray>
      </Taskbar>
    </Screen>
  );
}
